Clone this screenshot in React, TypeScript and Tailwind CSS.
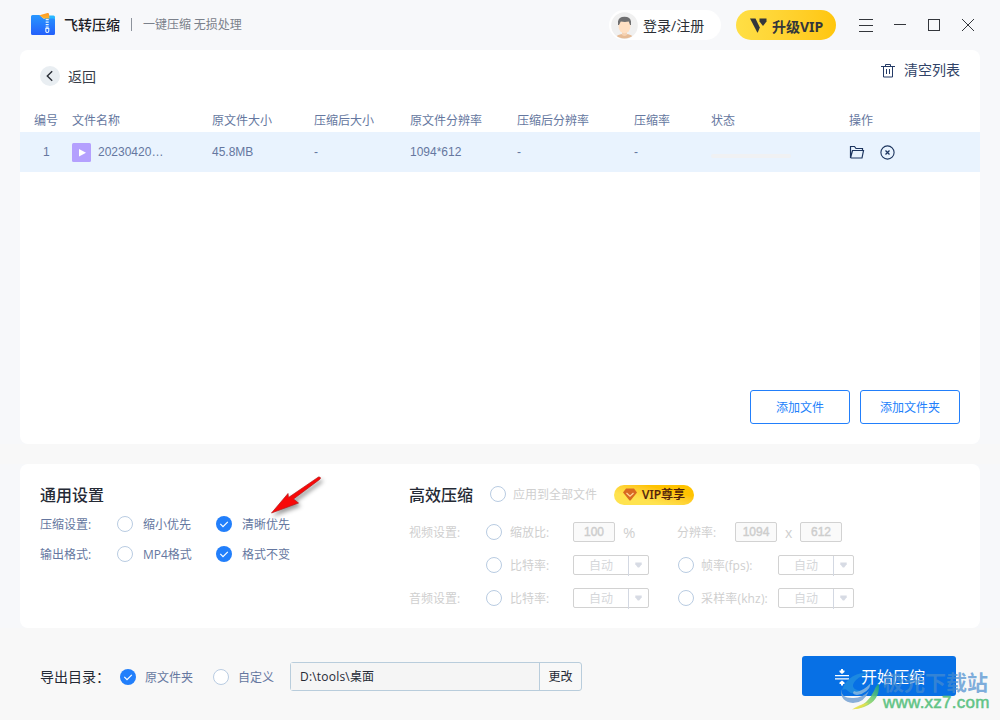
import React from "react";

const ui = "font-['Open_Sans','Noto_Sans_CJK_SC',sans-serif]";
const num = "font-['Liberation_Sans','Noto_Sans_CJK_SC',sans-serif]";

function Radio({ checked = false }: { checked?: boolean }) {
  return checked ? (
    <svg className="h-4 w-4 shrink-0" viewBox="0 0 16 16">
      <circle cx="8" cy="8" r="8" fill="#227ffb" />
      <path d="M4.300 7.900l2.700 2.800 4.800-4.900" fill="none" stroke="#fff" strokeWidth="1.200" />
    </svg>
  ) : (
    <span className="h-4 w-4 shrink-0 rounded-full border border-[#b9cce2] bg-white" />
  );
}

function Select() {
  return (
    <div className="flex h-5 w-[76px] shrink-0 rounded-[2px] border border-[#d2d2d2] text-[#d5d7da]">
      <span className="flex w-[54px] items-center justify-center pt-0.5">自动</span>
      <span className="-mb-0.5 flex grow items-center justify-center border-l border-[#d3d8e2] pb-0.5">
        <svg className="-ml-px" width="7" height="6" viewBox="0 0 7 6">
          <path d="M.3.500h6.400v1.700L4.200 5.500H2.800L.3 2.200z" fill="#d7dbe4" />
        </svg>
      </span>
    </div>
  );
}

function Field({ value }: { value: string }) {
  return (
    <div className={`flex h-5 w-[42px] shrink-0 items-center justify-center rounded-[2px] border border-[#d2d2d2] bg-[#fafafa] text-[12px] text-[#cdcdcd] [-webkit-text-stroke:0.4px_#cdcdcd] ${num}`}>
      {value}
    </div>
  );
}

function Header() {
  return (
    <header className="flex h-[50px] items-center pl-[30px]">
      <svg className="mr-2 mt-[-2px] h-[26px] w-[26px] shrink-0" viewBox="0 0 26 26">
        <defs>
          <linearGradient id="folder" x1="0" y1="0" x2="0" y2="1">
            <stop offset="0" stopColor="#2897ff" />
            <stop offset="1" stopColor="#2460fb" />
          </linearGradient>
          <linearGradient id="flap" x1="0" y1="0" x2="0" y2="1">
            <stop offset="0" stopColor="#ff9620" />
            <stop offset="1" stopColor="#ffb52d" />
          </linearGradient>
        </defs>
        <path d="M15 4.500h8.500q1.500 0 1.500 1.500v6H15z" fill="#29b7ff" />
        <path d="M1 5.500Q1 4 2.500 4h7l4 3.500H23.500q1.500 0 1.500 1.500v13.500q0 1.500-1.500 1.500h-21Q1 24 1 22.500z" fill="url(#folder)" />
        <path d="M9.500 4.200l8-2.200q1.300-.3 1.500 1l.5 4.500h-6z" fill="url(#flap)" />
        <path d="M17.200 8v9" stroke="#e5f3ff" strokeWidth="3" strokeDasharray="1.300 1.200" />
        <path d="M15.800 17.500h3v2.500q0 1.500-1.500 1.500T15.800 20z" fill="none" stroke="#e5f3ff" strokeWidth="1.100" />
      </svg>
      <span className="w-[67px] pb-[3px] text-[14px] leading-5 font-medium text-[#202126]">飞转压缩</span>
      <span className="mr-[11px] mb-px h-[13px] w-px bg-[#8d939c]" />
      <span className="pb-[3px] text-[12px] text-[#7b818b]">一键压缩 无损处理</span>
      <div className="ml-auto mr-[15px] flex h-[30px] w-[112px] shrink-0 items-center rounded-full bg-white pl-0.5">
        <svg className="mr-[5px] h-[27px] w-[27px]" viewBox="0 0 27 27">
          <defs>
            <clipPath id="face"><circle cx="13.500" cy="13.500" r="13" /></clipPath>
          </defs>
          <circle cx="13.500" cy="13.500" r="13.300" fill="#f0f0f0" />
          <g clipPath="url(#face)">
            <path d="M4 27q1-5 9.500-5T23 27z" fill="#e6bb95" />
            <path d="M11 18h5v5q-2.500 2-5 0z" fill="#f5d2b3" />
            <ellipse cx="13.500" cy="14" rx="6" ry="7.300" fill="#ffe0c3" />
            <path d="M7 13V9.500Q7.500 4.800 13.500 4.800T20 9.500V13h-1l-1.200-3.500q-4 .8-8 0L8 13z" fill="#6f6f70" />
          </g>
        </svg>
        <span className={`pt-px text-[14px] leading-5 text-[#2b2e34] ${ui}`}>登录/注册</span>
      </div>
      <div className="flex h-[30px] w-[100px] shrink-0 items-center rounded-full bg-linear-to-r from-[#ffdf45] to-[#ffc60b] pl-3.5">
        <svg className="mr-[5px] h-[15px] w-[17px]" viewBox="0 0 17 15">
          <path d="M0 .500h5.500l4.300 9-2 5H7.300z" fill="#33363b" />
          <path d="M9.500.500H16.500v3L13 8 9.500 3.500z" fill="#33363b" />
        </svg>
        <span className="pt-[3px] font-['Noto_Sans','Noto_Sans_CJK_SC',sans-serif] text-[14px] leading-5 font-bold text-[#33363b]">升级VIP</span>
      </div>
      <svg className="ml-[22px] mr-[24px] h-5 w-[118px] shrink-0" viewBox="0 0 118 20" fill="none" stroke="#33363b">
        <path d="M1 4.500h14M1 10.500h14M1 16.500h14M36 9.500h12" shapeRendering="crispEdges" />
        <rect x="70.500" y="4.500" width="11" height="11" shapeRendering="crispEdges" />
        <path d="M104 4l12 12M116 4l-12 12" />
      </svg>
    </header>
  );
}

const columns = ["编号", "文件名称", "原文件大小", "压缩后大小", "原文件分辨率", "压缩后分辨率", "压缩率", "状态", "操作"];
const tableGrid = "grid grid-cols-[38px_140px_102px_96px_107px_117px_77px_138px_1fr] items-center pl-[14px]";

function FilePanel() {
  return (
    <section className="mx-5 flex h-[394px] flex-col rounded-lg bg-white">
      <div className="flex h-14 items-center justify-between pl-5 pr-5">
        <div className="flex items-center gap-2 pb-1 text-[14px] leading-5 text-[#373d49]">
          <svg className="h-5 w-5" viewBox="0 0 20 20">
            <circle cx="10" cy="10" r="10" fill="#e9eef2" />
            <path d="M12.200 5.200L7.300 10l4.900 4.800" fill="none" stroke="#282d35" strokeWidth="1.400" />
          </svg>
          <span>返回</span>
        </div>
        <div className="flex items-center pb-4 text-[14px] leading-5 text-[#304367]">
          <svg className="mr-[9px] h-[15px] w-[14px]" viewBox="0 0 14 15" fill="none" stroke="#243b66">
            <path d="M0 3.500h14M4.500 3V1.500h5V3M2.500 4v10h9V4M5.500 6v5M8.500 6v5" />
          </svg>
          <span className="pb-0.5">清空列表</span>
        </div>
      </div>
      <div className={`h-[26px] pt-px text-[12px] text-[#6577a0] ${tableGrid}`}>
        {columns.map((c) => <span key={c} className="whitespace-nowrap">{c}</span>)}
      </div>
      <div className={`h-10 bg-[#e9f3fe] text-[12px] text-[#6577a0] ${num} ${tableGrid}`}>
        <span className="pl-[9px]">1</span>
        <span className="flex items-center">
          <svg className="mr-[7px] mt-px h-[19px] w-[19px]" viewBox="0 0 19 19">
            <rect width="19" height="19" rx="1.500" fill="#b4a0fe" />
            <path d="M7 6v7.500l7-3.800z" fill="#fff" />
          </svg>
          20230420…
        </span>
        <span>45.8MB</span>
        <span>-</span>
        <span>1094*612</span>
        <span>-</span>
        <span>-</span>
        <span className="mt-[7px] h-1 w-20 rounded-full bg-[#f0f1f3]" />
        <span className="flex items-center gap-[15px]">
          <svg className="h-[15px] w-[16px]" viewBox="0 0 16 15" fill="none" stroke="#1d355f" strokeWidth="1.200">
            <path d="M1.500 13V1.500h4L7 3.500h6.500v2M1.500 13l2-7.500h11l-1.500 7.500H1.500" />
          </svg>
          <svg className="h-[15px] w-[15px]" viewBox="0 0 15 15" fill="none" stroke="#1d355f" strokeWidth="1.100">
            <circle cx="7.500" cy="7.500" r="6.600" />
            <path d="M5.500 5.500l4 4M9.500 5.500l-4 4" strokeWidth="1.300" />
          </svg>
        </span>
      </div>
      <div className="mt-auto flex justify-end gap-2.5 px-5 pb-5 text-[12px] text-[#227ffb]">
        <button className="h-[34px] w-[100px] rounded-[3px] border border-[#227ffb]">添加文件</button>
        <button className="h-[34px] w-[100px] rounded-[3px] border border-[#227ffb]">添加文件夹</button>
      </div>
    </section>
  );
}

function OptionRow({ label, first, second }: { label: string; first: string; second: string }) {
  return (
    <div className="grid h-[30px] grid-cols-[77px_26px_73px_26px_1fr] items-center">
      <span className="pt-0.5">{label}</span>
      <Radio />
      <span className="pt-0.5">{first}</span>
      <Radio checked />
      <span className="pt-0.5">{second}</span>
    </div>
  );
}

function Arrow() {
  return (
    <svg className="pointer-events-none absolute left-[268px] top-[472px] h-[48px] w-[60px] drop-shadow-[2px_3px_2px_rgba(0,0,0,0.4)]" viewBox="0 0 60 48">
      <path d="M3.500 41L20 21.500l.5 4L50.500 5q1.500-.5 2 1-.2 1-1.200 1.700L25.500 27l5 4z" fill="#f80808" stroke="#b51a1a" strokeWidth=".7" />
    </svg>
  );
}

const advancedRow = "grid h-[33px] grid-cols-[77px_24px_63px_105px_23px_77px_76px] items-center";

function SettingsPanel() {
  return (
    <section className={`mx-5 flex h-[164px] rounded-lg bg-white pl-5 text-[12px] ${ui}`}>
      <div className="w-[369px] shrink-0 pt-[19px] text-[#6577a0]">
        <h2 className="mb-1.5 h-5 text-[16px] leading-6 font-medium text-[#252a35]">通用设置</h2>
        <OptionRow label="压缩设置:" first="缩小优先" second="清晰优先" />
        <OptionRow label="输出格式:" first="MP4格式" second="格式不变" />
      </div>
      <div className="text-[#cfcfcf]">
        <div className="mt-[20px] flex h-[21px] items-center">
          <h2 className="w-[81px] text-[16px] leading-6 font-medium text-[#252a35]">高效压缩</h2>
          <div className="flex items-center pb-px">
            <Radio />
            <span className="ml-[7px] w-[101px] pt-px">应用到全部文件</span>
          </div>
          <div className="flex h-5 w-20 items-center rounded-full bg-linear-to-tr from-[#ffe34f] from-30% to-[#ffc300] to-70% pl-[9px] text-[#50210b]">
            <svg className="mr-[5px] h-[13px] w-[14px]" viewBox="0 0 14 13">
              <path d="M3 .5h8l3 4L7.500 12.500h-1L0 4.500z" fill="#d96a22" />
              <path d="M3.500 5L7 8.200 10.500 5" fill="none" stroke="#ffd79a" strokeWidth="1.200" />
            </svg>
            <span className="font-['Noto_Sans','Noto_Sans_CJK_SC',sans-serif] text-[12px] font-medium [-webkit-text-stroke:0.2px_#50210b]">VIP尊享</span>
          </div>
        </div>
        <div className="mt-[10px] grid h-[33px] grid-cols-[77px_24px_63px_50px_54px_58px_50px_15px_42px] items-center">
          <span className="pt-0.5">视频设置:</span>
          <Radio />
          <span className="pt-0.5">缩放比:</span>
          <Field value="100" />
          <span className="pt-0.5 text-[15px]">%</span>
          <span className="pt-0.5">分辨率:</span>
          <Field value="1094" />
          <span className="pt-0.5 text-[14px] font-medium">x</span>
          <Field value="612" />
        </div>
        <div className={advancedRow}>
          <span />
          <Radio />
          <span className="pt-0.5">比特率:</span>
          <Select />
          <Radio />
          <span className="pt-0.5">帧率(fps):</span>
          <Select />
        </div>
        <div className={advancedRow}>
          <span className="pt-0.5">音频设置:</span>
          <Radio />
          <span className="pt-0.5">比特率:</span>
          <Select />
          <Radio />
          <span className="pt-0.5 tracking-[0.15px] whitespace-nowrap">采样率(khz):</span>
          <Select />
        </div>
      </div>
    </section>
  );
}

function Watermark() {
  return (
    <div className="pointer-events-none absolute left-[838px] top-[668px] flex h-[50px] w-[160px]">
      <svg className="h-[44px] w-[46px] shrink-0" viewBox="0 0 46 44">
        <defs>
          <linearGradient id="swoosh" x1="0" y1="1" x2="1" y2="0">
            <stop offset="0" stopColor="#e9e544" />
            <stop offset=".55" stopColor="#77cf73" />
            <stop offset="1" stopColor="#169d86" />
          </linearGradient>
        </defs>
        <path d="M4 22Q10 4 34 4 17 9 15 17q-1 5 9 6-9 5-14 0-2-3-6-1z" fill="#2492df" opacity=".75" />
        <path d="M3 21q0 10 13 9 8 0 15-7-5 12-16 12Q2 34 3 21z" fill="#7ba5d4" opacity=".9" />
        <path d="M16 23q6 3 17-8-2 10-14 12-6-1-3-4z" fill="#a3c6de" opacity=".7" />
        <path d="M16 41q14-5 20-18 2-6 5-7Q42 33 26 39q-5 2-10 2z" fill="url(#swoosh)" opacity=".9" />
        <path d="M14 41.500q7-5 17-7-6 6-17 7z" fill="#e6e14b" opacity=".85" />
      </svg>
      <div className="-ml-px">
        <div className="h-[26px] text-[21px] leading-[26px] font-bold whitespace-nowrap text-[#478cce]/70">极光下载站</div>
        <div className="font-['Liberation_Sans',sans-serif] text-[17px] leading-[18px] text-[#62c486] tracking-[0.25px] [-webkit-text-stroke:0.5px_#62c486]">www.xz7.com</div>
      </div>
    </div>
  );
}

export default function App() {
  return (
    <main className="relative h-[720px] w-[1000px] overflow-hidden bg-[#f7f8fa] font-['Noto_Sans_CJK_SC',sans-serif]">
      <Header />
      <FilePanel />
      <div className="h-5 bg-[#f8f8f8]" />
      <SettingsPanel />
      <footer className={`flex h-[92px] items-center bg-[#f8f8f8] pb-[3px] pl-10 text-[12px] text-[#6577a0] ${ui}`}>
        <span className="w-20 pt-2 text-[14px] leading-5 text-[#252a35]">导出目录：</span>
        <div className="flex items-center pt-2">
          <Radio checked />
          <span className="ml-[9px] w-[68px] pt-0.5">原文件夹</span>
          <Radio />
          <span className="ml-[9px] w-[52px] pt-0.5">自定义</span>
        </div>
        <div className="mt-2 flex h-[29px] w-[292px] shrink-0 rounded-[3px] border border-[#b9cddc] text-[#252a35]">
          <div className="flex w-[249px] items-center border-r border-[#b9cddc] bg-[#f5f5f5] pl-[9px] tracking-[0.2px]">D:\tools\桌面</div>
          <button className="grow">更改</button>
        </div>
        <button className="ml-[220px] mt-[7px] flex h-10 w-[154px] shrink-0 items-center rounded-[3px] bg-[#0770e5] pl-[33px] text-[16px] text-white">
          <svg className="mt-[2px] mr-3 h-[17px] w-[14px]" viewBox="0 0 14 17" fill="#fff">
            <path d="M0 6h14v1.200H0zM0 9.200h14v1.200H0zM6 0h2v1.500h1.500V3L7 5 4.500 3V1.500H6zM6 16.500h2V15h1.500v-1.500l-2.500-2-2.500 2V15H6z" />
          </svg>
          <span className="pt-0.5 leading-5">开始压缩</span>
        </button>
      </footer>
      <Arrow />
      <Watermark />
    </main>
  );
}
